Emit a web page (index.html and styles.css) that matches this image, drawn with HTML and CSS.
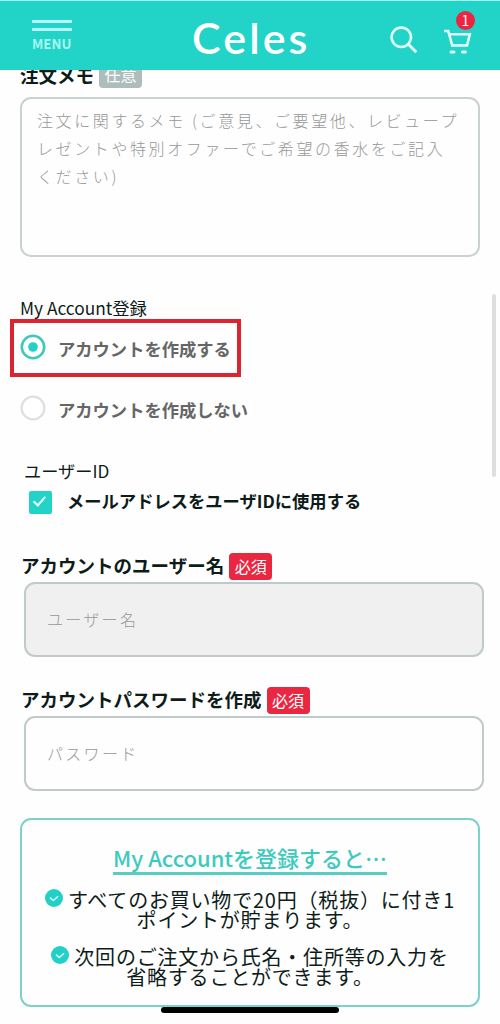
FILE: index.html
```
<!DOCTYPE html>
<html lang="ja">
<head>
<meta charset="utf-8">
<title>Celes</title>
<link rel="stylesheet" href="styles.css">
</head>
<body>
<header class="header">
  <div class="menu">
    <span class="menu-line"></span>
    <span class="menu-line"></span>
    <span class="menu-text">MENU</span>
  </div>
  <div class="logo">Celes</div>
  <div class="tools">
    <svg class="search" viewBox="0 0 28 28" width="28" height="28" fill="none" stroke="#dffffb" stroke-width="2.6"><circle cx="11.3" cy="11.3" r="9.7"/><path d="M18.3 18.3L26.3 26.3" stroke-width="3"/></svg>
    <div class="cart">
      <svg viewBox="0 0 28 26" width="28" height="26" fill="none" stroke="#dffffb" stroke-width="2.6"><path d="M0 2h4.2l4 14.4h14.6"/><path d="M5.2 5.2h20.6l-3 12.3"/><path d="M7 23h3M18.4 23h3" stroke-width="3" stroke-linecap="round"/></svg>
      <span class="count">1</span>
    </div>
  </div>
</header>
<main class="page">
  <div class="label memo-label">注文メモ<span class="badge optional">任意</span></div>
  <div class="textarea">注文に関するメモ (ご意見、ご要望他、レビュープ<br>レゼントや特別オファーでご希望の香水をご記入<br>ください)</div>

  <div class="section-title">My Account登録</div>
  <div class="option highlighted">
    <svg class="radio" viewBox="0 0 26 26" width="26" height="26"><circle cx="13" cy="13" r="11.2" fill="#fff" stroke="#3fc9bb" stroke-width="2.6"/><circle cx="13" cy="13" r="4.8" fill="#22d2c6"/></svg>
    <span>アカウントを作成する</span>
  </div>
  <div class="option">
    <svg class="radio" viewBox="0 0 26 26" width="26" height="26"><circle cx="13" cy="13" r="11.4" fill="#fff" stroke="#dedede" stroke-width="2.2"/></svg>
    <span>アカウントを作成しない</span>
  </div>

  <div class="userid">ユーザーID</div>
  <div class="check-row">
    <svg viewBox="0 0 23 23" width="23" height="23"><rect width="23" height="23" rx="2" fill="#22d3c8"/><path d="M4.5 10.2l4.3 4.2 7.4-8.5" fill="none" stroke="#e4fffc" stroke-width="2.2"/></svg>
    <span>メールアドレスをユーザIDに使用する</span>
  </div>

  <div class="label field-label">アカウントのユーザー名<span class="badge required">必須</span></div>
  <div class="input disabled">ユーザー名</div>
  <div class="label field-label second">アカウントパスワードを作成<span class="badge required">必須</span></div>
  <div class="input">パスワード</div>

  <section class="benefits">
    <h2 class="benefits-title">My Accountを登録すると…</h2>
    <p class="benefit"><svg class="tick" viewBox="0 0 18 18" width="18" height="18"><circle cx="9" cy="9" r="9" fill="#22d0c5"/><path d="M5 8.6l3.3 3 4.8-4.4" fill="none" stroke="#d8fffb" stroke-width="1.5"/></svg>すべてのお買い物で20円（税抜）に付き1<br>ポイントが貯まります。</p>
    <p class="benefit"><svg class="tick" viewBox="0 0 18 18" width="18" height="18"><circle cx="9" cy="9" r="9" fill="#22d0c5"/><path d="M5 8.6l3.3 3 4.8-4.4" fill="none" stroke="#d8fffb" stroke-width="1.5"/></svg>次回のご注文から氏名・住所等の入力を<br>省略することができます。</p>
  </section>
</main>
<div class="scrollbar"></div>
<div class="home-bar"></div>
</body>
</html>
```
FILE: styles.css
```
* { box-sizing: border-box; }
body {
  margin: 0;
  height: 1024px;
  overflow: hidden;
  position: relative;
  background: #fefefe;
  color: #0d1c19;
  font-family: "Noto Sans CJK JP", sans-serif;
  white-space: nowrap;
}
.header {
  position: absolute;
  z-index: 2;
  top: 0;
  left: 0;
  width: 500px;
  height: 70px;
  background: #22d3c8;
  border-top: 1px solid #a5f3ec;
  display: grid;
  grid-template-columns: 192px 198px 110px;
}
.menu { padding: 19px 0 0 32px; display: flex; flex-direction: column; }
.menu-line { width: 40px; height: 3px; margin-bottom: 5px; background: #b4fbf4; }
.menu-text { font-size: 13.3px; font-weight: 700; line-height: 16px; color: #a8f6ef; }
.logo {
  color: #fff;
  font-family: Lato, sans-serif;
  font-size: 43px;
  font-weight: 600;
  line-height: 74px;
  letter-spacing: 3.1px;
}
.tools { display: flex; }
.search { margin-top: 25px; }
.cart { position: relative; margin: 28px 0 0 26px; }
.count {
  position: absolute;
  left: 12px;
  top: -18px;
  width: 19px;
  height: 19px;
  border-radius: 50%;
  background: #ed2540;
  color: #fff;
  font-size: 14px;
  line-height: 19px;
  text-align: center;
}
.page { padding: 62px 16px 0 20px; }
.label {
  display: flex;
  align-items: center;
  gap: 5px;
  height: 27px;
  padding-left: 1px;
  font-size: 18.5px;
  font-weight: 700;
  line-height: 23px;
}
.memo-label { height: 26px; padding-left: 0; line-height: 21px; }
.field-label { align-items: flex-start; line-height: 25px; }
.badge {
  width: 43px;
  height: 27px;
  border-radius: 4px;
  color: #fff;
  font-size: 16px;
  font-weight: 400;
  line-height: 26px;
  text-align: center;
}
.optional { height: 26px; line-height: 25px; background: #adbdbb; }
.required { background: #ea2741; }
.textarea {
  width: 460px;
  height: 160px;
  margin-top: 9px;
  padding: 7px 15px;
  border: 2px solid #c8d2d0;
  border-radius: 11px;
  color: #989898;
  font-size: 16px;
  font-weight: 300;
  line-height: 28px;
  letter-spacing: 2.6px;
}
.section-title { margin-top: 40px; font-size: 17.3px; line-height: 22px; }
.option {
  display: flex;
  align-items: center;
  gap: 12px;
  height: 59px;
  color: #666;
  font-size: 17.3px;
  font-weight: 700;
}
.highlighted { width: 231px; height: 58px; margin-left: -10px; padding-left: 6px; border: 4px solid #dc2430; }
.option .radio { margin-top: -3px; }
.option + .option { height: 64px; }
.userid { margin: 18px 0 0 4px; font-size: 17.2px; line-height: 24px; }
.check-row {
  display: flex;
  align-items: center;
  gap: 15px;
  height: 24px;
  margin: 7px 0 39px 9px;
  font-size: 17.3px;
  font-weight: 700;
  line-height: 20px;
}
.check-row span { margin-top: -2px; }
.input {
  width: 460px;
  height: 75px;
  margin: 2px 0 0 4px;
  padding-left: 21px;
  border: 2px solid #c0cbc9;
  border-radius: 11px;
  color: #989898;
  font-size: 16px;
  font-weight: 300;
  line-height: 71px;
  letter-spacing: 2.3px;
}
.disabled { background: #f0f0f0; }
.second { margin-top: 30px; }
.benefits {
  width: 460px;
  height: 189px;
  margin-top: 27px;
  padding-top: 20px;
  border: 2px solid #7ad2ca;
  border-radius: 11px;
  text-align: center;
}
.benefits-title {
  width: 274px;
  height: 35px;
  margin: 0 auto 14px;
  border-bottom: 3px solid #58cec3;
  color: #3dcabe;
  font-size: 22px;
  font-weight: 500;
  line-height: 34px;
}
.benefit { margin: 0 0 16px; font-size: 20px; line-height: 20px; letter-spacing: .8px; }
.tick { margin-right: 5px; vertical-align: 1px; }
.scrollbar {
  position: absolute;
  left: 492px;
  top: 294px;
  width: 4px;
  height: 183px;
  border-radius: 2px;
  background: #dedede;
}
.home-bar {
  position: absolute;
  left: 161px;
  top: 1007px;
  width: 178px;
  height: 6px;
  border-radius: 3px;
  background: #000;
}
```
